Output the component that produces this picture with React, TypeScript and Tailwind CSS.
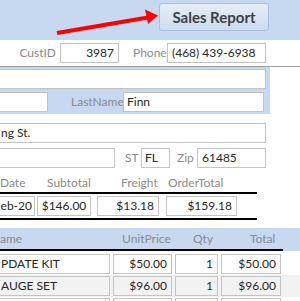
import React from "react";

const box = "h-[20px] shrink-0 whitespace-nowrap overflow-hidden border border-[#c3c3c3] bg-white flex items-center text-[#262626]";
const label = "shrink-0 whitespace-nowrap text-[#8a8a8a]";

export default function App() {
  return (
    <div className="relative h-[301px] w-[300px] overflow-hidden bg-white text-[12px] leading-none font-['Lato',sans-serif]">
      {/* header band */}
      <div className="flex h-[40px] justify-end bg-[#c6d9f1] pr-[31px] pt-[3px]">
        <button className="h-[28px] w-[110px] rounded-[3px] border border-[#a9bfdc] bg-gradient-to-b from-[#e6eef8] to-[#cbdbf0] text-[15px] font-bold text-[#404040]">
          Sales Report
        </button>
      </div>
      <svg className="absolute left-0 top-0" width="300" height="40" viewBox="0 0 300 40">
        <line x1="57" y1="33" x2="148" y2="17.5" stroke="#f00" strokeWidth="4" />
        <polygon points="158,15.5 145,9.5 148,24" fill="#f00" />
      </svg>

      {/* customer row */}
      <div className="mt-[3px] flex items-center">
        <span className={`${label} w-[57px] pr-[1px] text-right`}>CustID</span>
        <div className={`${box} ml-[3px] w-[59px] justify-end px-[4px]`}>3987</div>
        <span className={`${label} ml-[14px] w-[34px]`}>Phone</span>
        <div className={`${box} w-[99px] px-[4px]`}>(468) 439-6938</div>
      </div>

      <div className="mt-[3px] h-px w-[300px] bg-[#9c9c9c]" />

      {/* name band */}
      <div className="flex w-[270px] flex-col gap-[3px] bg-[#c6d9f1] pb-[2px] pt-[2px]">
        <div className={`${box} -ml-[2px] w-[268px]`} />
        <div className="flex items-center">
          <div className={`${box} -ml-[2px] w-[50px]`} />
          <span className={`${label} ml-[23px] w-[52px]`}>LastName</span>
          <div className={`${box} w-[141px] px-[3px]`}>Finn</div>
        </div>
      </div>

      {/* address */}
      <div className={`${box} -ml-[2px] mt-[9px] w-[268px] pl-[2px]`}>ng St.</div>
      <div className="mt-[5px] flex items-center">
        <div className={`${box} -ml-[2px] w-[117px]`} />
        <span className={`${label} ml-[10px] w-[16px]`}>ST</span>
        <div className={`${box} w-[29px] px-[3px]`}>FL</div>
        <span className={`${label} ml-[7px] w-[20px]`}>Zip</span>
        <div className={`${box} w-[69px] px-[4px]`}>61485</div>
      </div>

      {/* order totals */}
      <div className="mt-[9px] flex items-center">
        <span className={`${label} w-[47px]`}>Date</span>
        <span className={`${label} w-[74px]`}>Subtotal</span>
        <span className={`${label} w-[47px]`}>Freight</span>
        <span className={label}>OrderTotal</span>
      </div>
      <div className="mt-[3px] h-[2px] w-[257px] bg-black" />
      <div className="flex items-center py-[2px]">
        <div className={`${box} -ml-[2px] h-[18px] w-[37px] justify-end pr-[2px]`}>eb-20</div>
        <div className={`${box} ml-[2px] h-[18px] w-[54px] justify-center`}>$146.00</div>
        <div className={`${box} ml-[6px] h-[18px] w-[62px] justify-end px-[4px]`}>$13.18</div>
        <div className={`${box} ml-[7px] h-[18px] w-[71px] justify-end px-[4px]`}>$159.18</div>
      </div>
      <div className="h-[2px] w-[257px] bg-black" />

      {/* line items */}
      <div className="mt-[8px] bg-[#c6d9f1] pt-[5px]">
        <div className="flex items-center pb-[4px]">
          <span className={`${label} w-[122px]`}>ame</span>
          <span className={`${label} w-[71px]`}>UnitPrice</span>
          <span className={`${label} w-[57px]`}>Qty</span>
          <span className={label}>Total</span>
        </div>
        <div className="h-[2px] w-[283px] bg-black" />
      </div>
      <div className="flex items-center gap-[3px] pt-[3px] pb-[1px]">
        <div className={`${box} -ml-[2px] w-[112px] pl-[2px]`}>PDATE KIT</div>
        <div className={`${box} w-[59px] justify-end px-[4px]`}>$50.00</div>
        <div className={`${box} w-[43px] justify-end px-[4px]`}>1</div>
        <div className={`${box} w-[60px] justify-end px-[4px]`}>$50.00</div>
      </div>
      <div className="flex items-center gap-[3px] bg-[#f2f2f2] py-[1px]">
        <div className={`${box} -ml-[2px] w-[112px] !bg-[#f2f2f2] pl-[2px]`}>AUGE SET</div>
        <div className={`${box} w-[59px] justify-end !bg-[#f2f2f2] px-[4px]`}>$96.00</div>
        <div className={`${box} w-[43px] justify-end !bg-[#f2f2f2] px-[4px]`}>1</div>
        <div className={`${box} w-[60px] justify-end !bg-[#f2f2f2] px-[4px]`}>$96.00</div>
      </div>
      <div className="flex items-center gap-[3px] pt-[1px]">
        <div className={`${box} -ml-[2px] w-[112px]`} />
        <div className={`${box} w-[59px]`} />
        <div className={`${box} w-[43px]`} />
        <div className={`${box} w-[60px]`} />
      </div>
    </div>
  );
}
